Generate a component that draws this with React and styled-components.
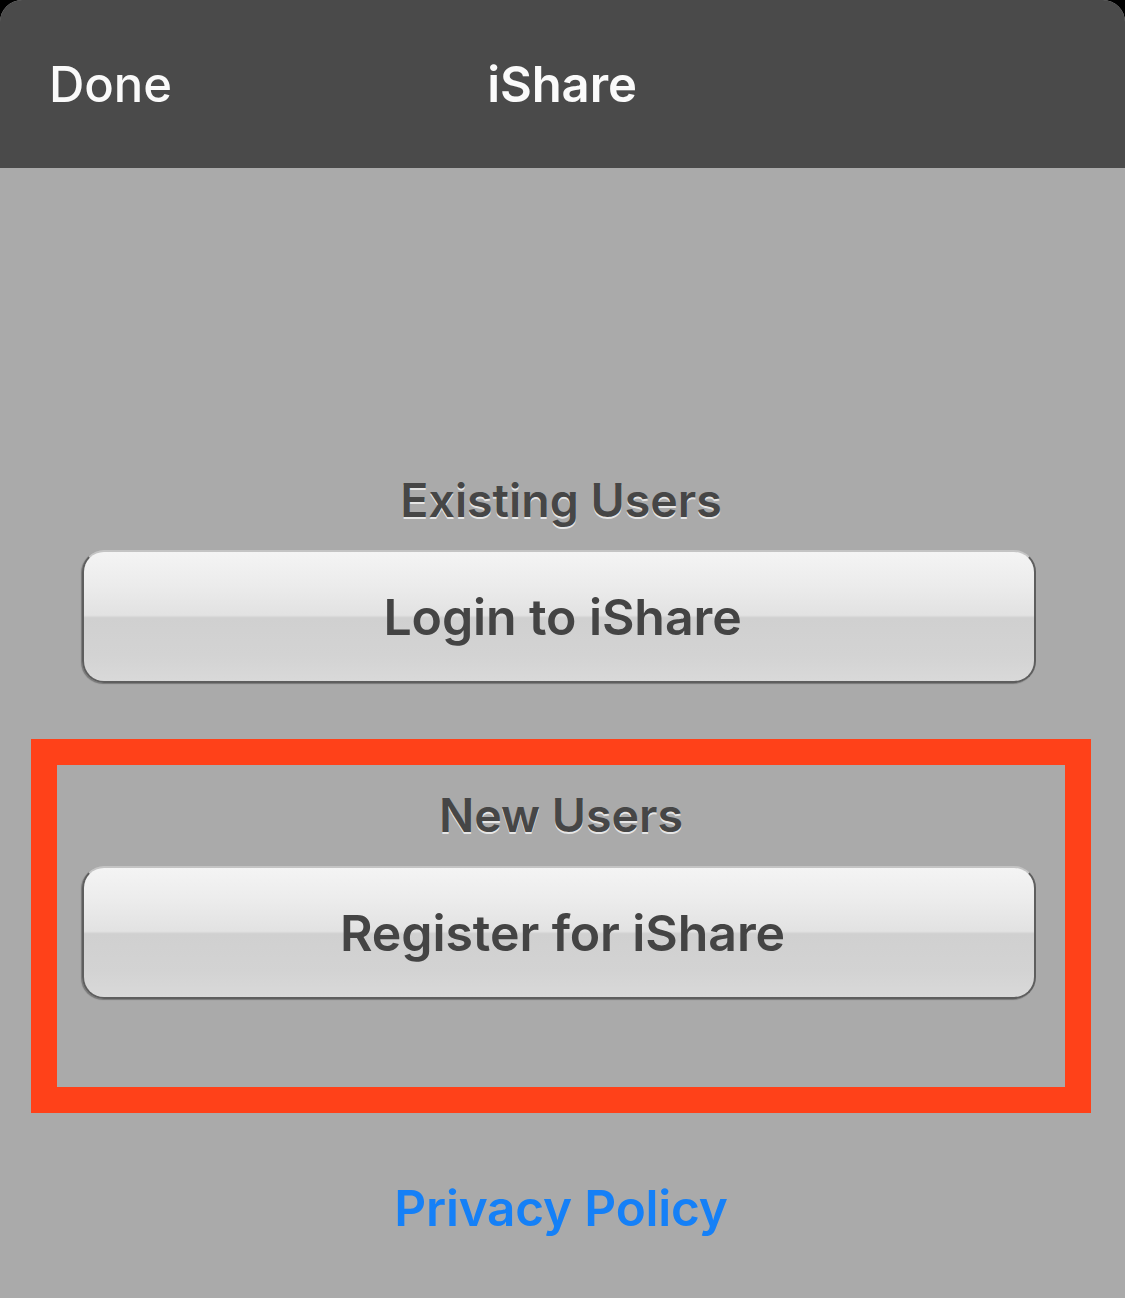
import React from "react";
import styled, { createGlobalStyle } from "styled-components";

const Global = createGlobalStyle`
  html, body { margin: 0; padding: 0; background: #000; }
  body { font-family: Inter, "Noto Sans", "Liberation Sans", sans-serif; }
`;

const Screen = styled.div`
  width: 1125px;
  height: 1298px;
  background: #aaaaaa;
  border-radius: 22px 22px 0 0;
  overflow: hidden;
  display: flex;
  flex-direction: column;
`;

const NavBar = styled.header`
  height: 168px;
  flex: none;
  background: #4a4a4a;
  display: grid;
  grid-template-columns: 1fr auto 1fr;
  align-items: center;
  padding: 0 50px 0 49px;
  box-sizing: border-box;
  color: #fafafa;
`;

const NavButton = styled.span`
  font-size: 49px;
  font-weight: 500;
  justify-self: start;
  letter-spacing: -0.1px;
`;

const NavTitle = styled.h1`
  margin: 0;
  font-size: 49px;
  font-weight: 600;
  letter-spacing: -0.1px;
`;

const Body = styled.main`
  width: 1060px;
  display: flex;
  flex-direction: column;
  align-items: flex-start;
  padding: 304px 0 0 31px;
`;

const Label = styled.div`
  align-self: stretch;
  height: 56px;
  line-height: 56px;
  font-size: 46.5px;
  font-weight: 600;
  color: #464646;
  text-shadow: 0 2px 0 #e6e6e6;
  text-align: center;
`;

const GlossButton = styled.button`
  width: 954px;
  height: 133px;
  margin-top: ${(p) => p.$gap}px;
  margin-left: ${(p) => p.$indent}px;
  box-sizing: border-box;
  border: 2px solid #5e5e5e;
  border-top-color: #c4c4c4;
  border-radius: 22px;
  background: linear-gradient(
    #f4f4f4 0%,
    #ececec 25%,
    #e2e2e2 49%,
    #d0d0d0 51%,
    #d3d3d3 80%,
    #d9d9d9 100%
  );
  box-shadow: -1px 1px 1px rgba(0, 0, 0, 0.3);
  font-family: inherit;
  font-size: 50px;
  font-weight: 600;
  color: #444;
  letter-spacing: -0.1px;
  cursor: pointer;
  padding: 0 0 0 7px;
`;

const Highlight = styled.section`
  align-self: stretch;
  margin-top: 56px;
  box-sizing: border-box;
  border: 26px solid #ff4119;
  padding: 22px 0 88px 0;
  display: flex;
  flex-direction: column;
  align-items: flex-start;
`;

const Link = styled.a`
  align-self: stretch;
  margin-top: 67px;
  height: 56px;
  line-height: 56px;
  font-size: 49.5px;
  font-weight: 600;
  color: #1580f7;
  text-decoration: none;
  text-align: center;
  letter-spacing: -0.2px;
`;

export default function App() {
  return (
    <>
      <Global />
      <Screen>
        <NavBar>
          <NavButton>Done</NavButton>
          <NavTitle>iShare</NavTitle>
          <span />
        </NavBar>
        <Body>
          <Label>Existing Users</Label>
          <GlossButton $gap={22} $indent={51}>Login to iShare</GlossButton>
          <Highlight>
            <Label>New Users</Label>
            <GlossButton $gap={23} $indent={25}>Register for iShare</GlossButton>
          </Highlight>
          <Link href="#">Privacy Policy</Link>
        </Body>
      </Screen>
    </>
  );
}
